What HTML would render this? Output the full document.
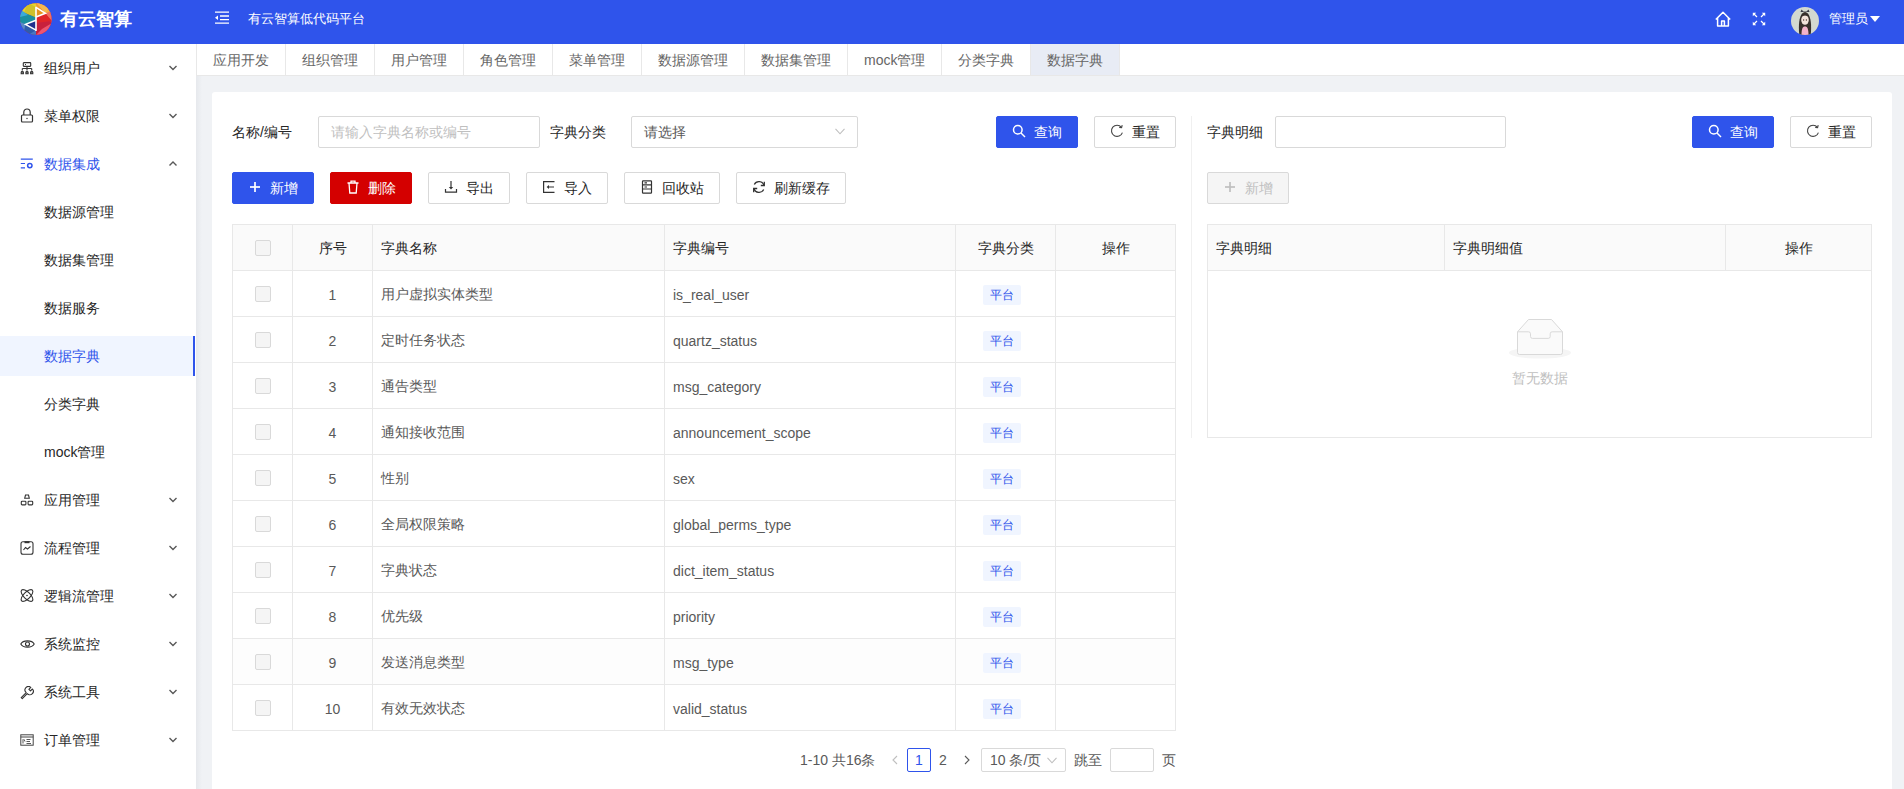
<!DOCTYPE html>
<html><head><meta charset="utf-8">
<style>
*{box-sizing:border-box;margin:0;padding:0}
html,body{width:1904px;height:789px;overflow:hidden;background:#f0f2f5;font-family:"Liberation Sans",sans-serif;font-size:14px;color:#262626}
.abs{position:absolute}
#hdr{position:absolute;left:0;top:0;width:1904px;height:44px;background:#2f54eb;color:#fff}
#side{position:absolute;left:0;top:44px;width:196px;height:745px;background:#fff}
.mi{position:absolute;left:0;width:195px;height:48px;line-height:48px;font-size:14px;color:#262626}
.mi .t{position:absolute;left:44px;top:0}
.mi svg.ic{position:absolute;left:20px;top:17px}
.mi svg.ch{position:absolute;left:168px;top:20px}
#tabs{position:absolute;left:196px;top:44px;width:1708px;height:32px;background:#fff;border-bottom:1px solid #e8e8e8;border-left:1px solid #e8e8e8}
.tab{float:left;height:31px;line-height:29px;padding:2px 16px 0;border-right:1px solid #e8e8e8;color:#666;font-size:14px}
.tab.on{background:#e8ecf5}
#card{position:absolute;left:212px;top:92px;width:1680px;height:720px;background:#fff;border-radius:3px}
.lbl{position:absolute;line-height:32px;font-size:14px;color:#262626}
.inp{position:absolute;height:32px;border:1px solid #d9d9d9;border-radius:2px;background:#fff;line-height:30px;padding-left:12px;font-size:14px}
.btn{position:absolute;height:32px;border:1px solid #d9d9d9;border-radius:2px;background:#fff;line-height:30px;font-size:14px;color:#262626;padding-left:16px}
.btn svg{position:absolute;left:15px;top:7px}
.btn span{position:absolute;left:37px;top:0}
.btn.pri{background:#2f54eb;border-color:#2f54eb;color:#fff;font-weight:500}
.btn.red{background:#d40000;border-color:#d40000;color:#fff;font-weight:500}
.btn.dis{background:#f5f5f5;color:#bfbfbf}
table{border-collapse:collapse;position:absolute;table-layout:fixed}
td,th{border:1px solid #e8e8e8;height:46px;font-size:14px;padding:2px 8px 0;text-align:left;font-weight:normal;color:#595959}
th{background:#fafafa;color:#262626}
.c{text-align:center}
.cb{display:inline-block;position:relative;top:-1px;width:16px;height:16px;border:1px solid #d9d9d9;border-radius:2px;background:#f5f5f5;vertical-align:middle}
.tag{display:inline-block;height:20px;line-height:20px;padding:0 7px;background:#f0f5ff;color:#2f54eb;font-size:12px;border-radius:2px;margin-right:7px}
</style></head><body>
<div id="hdr">
<svg class="abs" style="left:20px;top:3px" width="32" height="32" viewBox="0 0 32 32">
<defs><clipPath id="cc"><circle cx="15.8" cy="16" r="15.8"/></clipPath></defs>
<g clip-path="url(#cc)">
<rect x="0" y="0" width="32" height="32" fill="#d8243e"/>
<polygon points="0,0 16,0 16,14.5 0,8" fill="#e3d42c"/>
<polygon points="4,9.5 16,14.5 16,4 8,0" fill="#cfc02a"/>
<polygon points="16,0 32,0 32,10 25.4,10.3" fill="#f2ad45"/>
<polygon points="16,4.4 25.4,10.3 16,14" fill="#e8921e"/>
<polygon points="16,0 25.4,10.3 32,0" fill="#f5b850"/><polygon points="16,0 25.4,10.3 16,4.4" fill="#f0a030"/>
<polygon points="25.4,10.3 32,8 32,22" fill="#f07060"/>
<polygon points="16,14 25.4,10.3 32,18 16,20" fill="#e02528"/>
<polygon points="16,20 32,18 32,32 16,32" fill="#c8203c"/>
<polygon points="22,26 32,20 32,32 16,32" fill="#ec5570"/>
<polygon points="0,8 16,14.5 16,17.2 5.5,21.3 0,20" fill="#1b8fa0"/>
<polygon points="0,6 8,12 0,14" fill="#3aaad8"/>
<polygon points="0,20 5.5,21.3 16,27.2 16,32 0,32" fill="#2f5cab"/>
<polygon points="0,19 5.5,21.3 4,28 0,28" fill="#5a8ac8"/>
<polygon points="16,17.2 5.5,21.3 16,27.2" fill="#1f2d8c"/>
<polygon points="16,27.2 16,32 8,32" fill="#4a78c0"/>
</g>
<polyline points="16,4.4 25.4,10.3 16,14" fill="none" stroke="#fff" stroke-width="1.5" stroke-linejoin="miter"/>
<polyline points="16,17.2 5.5,21.3 16,27.2" fill="none" stroke="#fff" stroke-width="1.5"/>
<line x1="16" y1="3.8" x2="16" y2="28" stroke="#fff" stroke-width="1.6"/>
</svg>
<div class="abs" style="left:60px;top:0;line-height:38px;font-size:18px;font-weight:bold;color:#fff">有云智算</div>
<svg class="abs" style="left:215px;top:11px" width="14" height="14" viewBox="0 0 14 14" fill="none" stroke="#fff" stroke-width="1.3"><path d="M0 1.2 H14 M5 5 H14 M5 8.6 H14 M0 12.2 H14"/><polygon points="0,6.8 3,4.6 3,9" fill="#fff" stroke="none"/></svg>
<div class="abs" style="left:248px;top:0;line-height:38px;font-size:13px;color:#fff;font-weight:500">有云智算低代码平台</div>
<svg class="abs" style="left:1715px;top:11px" width="16" height="16" viewBox="0 0 16 16" fill="none" stroke="#fff" stroke-width="1.5" stroke-linejoin="round">
<path d="M0.8 8.6 L8 1.2 L15.2 8.6 M2.6 7 V14.9 H13.4 V7 M6.6 14.9 V9.9 H9.4 V14.9"/>
</svg>
<svg class="abs" style="left:1752px;top:12px" width="14" height="14" viewBox="0 0 14 14" fill="none" stroke="#fff" stroke-width="1.2">
<path d="M1.5 1.5 L5 5 M12.5 1.5 L9 5 M1.5 12.5 L5 9 M12.5 12.5 L9 9"/>
<path d="M0.8 0.8 H4.2 L0.8 4.2 Z M13.2 0.8 H9.8 L13.2 4.2 Z M0.8 13.2 H4.2 L0.8 9.8 Z M13.2 13.2 H9.8 L13.2 9.8 Z" fill="#fff" stroke="none"/>
</svg>
<svg class="abs" style="left:1791px;top:7px" width="28" height="28" viewBox="0 0 28 28">
<defs><clipPath id="av"><circle cx="14" cy="14" r="14"/></clipPath></defs>
<g clip-path="url(#av)">
<rect width="28" height="28" fill="#d3d9d0"/>
<path d="M9.5 5 L10.5 2.5 L12.5 4.5 L15.5 4.5 L17.5 2.5 L18.5 5 Z" fill="#3b3d48"/>
<path d="M8.5 30 C7 18 8 6 14 5 C20 6 21 18 19.5 30 Z" fill="#37302c"/>
<ellipse cx="14" cy="13" rx="3.8" ry="4.8" fill="#f1e2da"/>
<path d="M10.3 10 C12 8 16 8 17.7 10 L17.5 8 C16 6.5 12 6.5 10.5 8 Z" fill="#37302c"/>
<circle cx="12.6" cy="13" r="0.7" fill="#5a4038"/><circle cx="15.4" cy="13" r="0.7" fill="#5a4038"/>
<path d="M10.5 28 C10.5 22 11.5 19.5 14 19.5 C16.5 19.5 17.5 22 17.5 28 Z" fill="#f2b3cb"/>
</g></svg>
<div class="abs" style="left:1829px;top:0;line-height:38px;font-size:13px;color:#fff;font-weight:500">管理员</div>
<svg class="abs" style="left:1870px;top:16px" width="10" height="6" viewBox="0 0 10 6"><polygon points="0,0 10,0 5,6" fill="#fff"/></svg>
</div>
<div id="side"><div class="mi" style="top:0px;"><svg class="ic" style="top:18px" width="14" height="13" viewBox="0 0 14 13" fill="none" stroke="#333" stroke-width="1.1"><rect x="3.3" y="0.6" width="7.4" height="3.8" rx="0.6"/><path d="M5 2.5 H6" stroke-width="1"/><path d="M7 4.4 V6.5 M2.3 6.5 H11.7 M2.3 6.5 V8.5 M7 6.5 V8.5 M11.7 6.5 V8.5"/><path d="M1.2 11.8 V10.3 A1.1 1.1 0 0 1 3.4 10.3 V11.8 Z M5.9 11.8 V10.3 A1.1 1.1 0 0 1 8.1 10.3 V11.8 Z M10.6 11.8 V10.3 A1.1 1.1 0 0 1 12.8 10.3 V11.8 Z" fill="#777"/></svg><span class="t">组织用户</span><svg class="ch" width="10" height="8" viewBox="0 0 10 8" fill="none" stroke="#595959" stroke-width="1.4"><polyline points="1.5,2 5,5.5 8.5,2"/></svg></div><div class="mi" style="top:48px;"><svg class="ic" style="top:16px" width="14" height="15" viewBox="0 0 14 15" fill="none" stroke="#333" stroke-width="1.2"><path d="M3.8 7 V4.2 A3.2 3.2 0 0 1 10.2 4.2 V7"/><rect x="1.5" y="7" width="11" height="7" rx="1"/><circle cx="7" cy="10.5" r="0.7" fill="#333" stroke="none"/></svg><span class="t">菜单权限</span><svg class="ch" width="10" height="8" viewBox="0 0 10 8" fill="none" stroke="#595959" stroke-width="1.4"><polyline points="1.5,2 5,5.5 8.5,2"/></svg></div><div class="mi" style="top:96px;color:#2f54eb;"><svg class="ic" style="top:18px" width="14" height="12" viewBox="0 0 14 12" fill="none" stroke="#2f54eb" stroke-width="1.2"><path d="M0.8 1.2 H12.8 M0.8 5.5 H5 M0.8 9.8 H5"/><circle cx="9.8" cy="7.6" r="2.2" stroke-width="1.5"/></svg><span class="t">数据集成</span><svg class="ch" width="10" height="8" viewBox="0 0 10 8" fill="none" stroke="#595959" stroke-width="1.4"><polyline points="1.5,5.5 5,2 8.5,5.5"/></svg></div><div class="mi" style="top:144px;"><span class="t">数据源管理</span></div><div class="mi" style="top:192px;"><span class="t">数据集管理</span></div><div class="mi" style="top:240px;"><span class="t">数据服务</span></div><div class="mi" style="top:292px;height:40px;line-height:40px;background:#f0f5ff;color:#2f54eb"><span class="t">数据字典</span><div class="abs" style="left:193px;top:0;width:2px;height:40px;background:#2f54eb"></div></div><div class="mi" style="top:336px;"><span class="t">分类字典</span></div><div class="mi" style="top:384px;"><span class="t">mock管理</span></div><div class="mi" style="top:432px;"><svg class="ic" style="top:18px" width="14" height="14" viewBox="0 0 14 14" fill="none" stroke="#333" stroke-width="1.1"><path d="M5.5 1 H8.5 L9.3 4.3 H4.7 Z"/><rect x="1.3" y="7.3" width="4.6" height="3.6" rx="0.8"/><rect x="8.1" y="7.3" width="4.6" height="3.6" rx="0.8"/></svg><span class="t">应用管理</span><svg class="ch" width="10" height="8" viewBox="0 0 10 8" fill="none" stroke="#595959" stroke-width="1.4"><polyline points="1.5,2 5,5.5 8.5,2"/></svg></div><div class="mi" style="top:480px;"><svg class="ic" style="top:16px" width="14" height="15" viewBox="0 0 14 15" fill="none" stroke="#333" stroke-width="1.1"><rect x="1" y="1.8" width="12" height="12.4" rx="2"/><path d="M4.5 2.2 H9.5" stroke-width="2"/><polyline points="3.5,10 5.5,7.5 7.5,9 10.5,6.5"/></svg><span class="t">流程管理</span><svg class="ch" width="10" height="8" viewBox="0 0 10 8" fill="none" stroke="#595959" stroke-width="1.4"><polyline points="1.5,2 5,5.5 8.5,2"/></svg></div><div class="mi" style="top:528px;"><svg class="ic" style="top:16px;left:19px" width="16" height="15" viewBox="0 0 16 15" fill="none" stroke="#333" stroke-width="1.1"><ellipse cx="8" cy="7.5" rx="7.6" ry="3.3" transform="rotate(45 8 7.5)"/><ellipse cx="8" cy="7.5" rx="7.6" ry="3.3" transform="rotate(-45 8 7.5)"/><circle cx="8" cy="7.5" r="0.8" fill="#333" stroke="none"/></svg><span class="t">逻辑流管理</span><svg class="ch" width="10" height="8" viewBox="0 0 10 8" fill="none" stroke="#595959" stroke-width="1.4"><polyline points="1.5,2 5,5.5 8.5,2"/></svg></div><div class="mi" style="top:576px;"><svg class="ic" style="top:19px" width="15" height="10" viewBox="0 0 15 10" fill="none" stroke="#333" stroke-width="1.1"><path d="M0.8 5 C3 0.8 12 0.8 14.2 5 C12 9.2 3 9.2 0.8 5 Z"/><circle cx="7.5" cy="5" r="2"/></svg><span class="t">系统监控</span><svg class="ch" width="10" height="8" viewBox="0 0 10 8" fill="none" stroke="#595959" stroke-width="1.4"><polyline points="1.5,2 5,5.5 8.5,2"/></svg></div><div class="mi" style="top:624px;"><svg class="ic" style="top:18px" width="14" height="14" viewBox="0 0 14 14" fill="none" stroke="#333" stroke-width="1.1" stroke-linejoin="round"><path d="M1.2 11.6 L6.2 6.6 A3.4 3.4 0 0 1 10.8 1.4 L8.9 3.3 L10.5 4.9 L12.4 3 A3.4 3.4 0 0 1 7.2 7.6 L2.3 12.6 Z"/></svg><span class="t">系统工具</span><svg class="ch" width="10" height="8" viewBox="0 0 10 8" fill="none" stroke="#595959" stroke-width="1.4"><polyline points="1.5,2 5,5.5 8.5,2"/></svg></div><div class="mi" style="top:672px;"><svg class="ic" style="top:18px" width="14" height="12" viewBox="0 0 14 12" fill="none" stroke="#444" stroke-width="1"><rect x="0.8" y="0.8" width="12.4" height="10.4"/><path d="M0.8 3 H13.2"/><path d="M3 5.2 V9.5 M4 5.3 L5 7.5 M6.5 5.5 H10.5 M6.5 7.5 H10 M6.5 9.5 H11" stroke-width="0.9"/></svg><span class="t">订单管理</span><svg class="ch" width="10" height="8" viewBox="0 0 10 8" fill="none" stroke="#595959" stroke-width="1.4"><polyline points="1.5,2 5,5.5 8.5,2"/></svg></div></div>
<div id="tabs"><div class="tab">应用开发</div><div class="tab">组织管理</div><div class="tab">用户管理</div><div class="tab">角色管理</div><div class="tab">菜单管理</div><div class="tab">数据源管理</div><div class="tab">数据集管理</div><div class="tab">mock管理</div><div class="tab">分类字典</div><div class="tab on">数据字典</div></div>
<div class="abs" style="left:196px;top:76px;width:6px;height:713px;background:linear-gradient(to right,rgba(0,20,50,0.045),rgba(0,20,50,0))"></div>
<div id="card"><div class="lbl" style="left:20px;top:24px">名称/编号</div><div class="inp" style="left:106px;top:24px;width:222px;color:#bfbfbf">请输入字典名称或编号</div><div class="lbl" style="left:338px;top:24px">字典分类</div><div class="inp" style="left:419px;top:24px;width:227px;color:#595959">请选择<svg class="abs" style="right:12px;top:11px" width="10" height="7" viewBox="0 0 10 7" fill="none" stroke="#bfbfbf" stroke-width="1.1"><polyline points="0.5,0.8 5,5.8 9.5,0.8"/></svg></div><div class="btn pri" style="left:784px;top:24px;width:82px"><svg width="14" height="14" viewBox="0 0 14 14" fill="none" stroke="#fff" stroke-width="1.5"><circle cx="5.8" cy="5.8" r="4.3"/><line x1="9" y1="9" x2="13" y2="13"/></svg><span>查询</span></div><div class="btn" style="left:882px;top:24px;width:82px"><svg width="14" height="14" viewBox="0 0 14 14" fill="none" stroke="#444" stroke-width="1.1"><path d="M11.4 3.2 A5.6 5.6 0 1 0 12.4 8.6"/><polyline points="12.2,1.2 11.6,3.6 9.2,3.4"/></svg><span>重置</span></div><div class="btn pri" style="left:20px;top:80px;width:82px"><svg width="14" height="14" viewBox="0 0 14 14" fill="none" stroke="#fff" stroke-width="1.7"><line x1="7" y1="2" x2="7" y2="12"/><line x1="2" y1="7" x2="12" y2="7"/></svg><span>新增</span></div><div class="btn red" style="left:118px;top:80px;width:82px"><svg width="14" height="14" viewBox="0 0 14 14" fill="none" stroke="#fff" stroke-width="1.3"><path d="M1.5 3 H12.5 M5 3 V1.2 H9 V3 M3 3 L3.8 13 H10.2 L11 3"/></svg><span>删除</span></div><div class="btn" style="left:216px;top:80px;width:82px"><svg width="14" height="14" viewBox="0 0 14 14" fill="none" stroke="#333" stroke-width="1.2"><path d="M7 1 V8 M1.5 9 V12.2 H12.5 V9"/><polygon points="4.8,7 9.2,7 7,9.6" fill="#333" stroke="none"/></svg><span>导出</span></div><div class="btn" style="left:314px;top:80px;width:82px"><svg width="14" height="14" viewBox="0 0 14 14" fill="none" stroke="#333" stroke-width="1.2"><path d="M12.5 1.6 H1.6 V12.4 H12.5 M12 7 H6.5"/><polygon points="7,4.9 7,9.1 4.6,7" fill="#333" stroke="none"/></svg><span>导入</span></div><div class="btn" style="left:412px;top:80px;width:96px"><svg width="14" height="14" viewBox="0 0 14 14" fill="none" stroke="#333" stroke-width="1.2"><rect x="2.5" y="0.8" width="9" height="12.4" rx="0.6"/><path d="M2.5 4.8 H11.5 M2.5 9 H11.5 M4.5 2.8 H7 M4.5 7 H7 M9.5 11 H9.6"/></svg><span>回收站</span></div><div class="btn" style="left:524px;top:80px;width:110px"><svg width="14" height="14" viewBox="0 0 14 14" fill="none" stroke="#333" stroke-width="1.3"><path d="M12 5.5 A5.2 5.2 0 0 0 2.3 4.5 M2 8.5 A5.2 5.2 0 0 0 11.7 9.5"/><polyline points="12.3,1.8 12.3,5.5 8.8,5.5"/><polyline points="1.7,12.2 1.7,8.5 5.2,8.5"/></svg><span>刷新缓存</span></div><table style="left:20px;top:132px;width:943px"><colgroup><col style="width:60px"><col style="width:80px"><col style="width:292px"><col style="width:291px"><col style="width:100px"><col style="width:120px"></colgroup><tr><th class="c"><span class="cb"></span></th><th class="c">序号</th><th>字典名称</th><th>字典编号</th><th class="c">字典分类</th><th class="c">操作</th></tr><tr><td class="c"><span class="cb"></span></td><td class="c">1</td><td>用户虚拟实体类型</td><td>is_real_user</td><td class="c"><span class="tag">平台</span></td><td></td></tr><tr><td class="c"><span class="cb"></span></td><td class="c">2</td><td>定时任务状态</td><td>quartz_status</td><td class="c"><span class="tag">平台</span></td><td></td></tr><tr><td class="c"><span class="cb"></span></td><td class="c">3</td><td>通告类型</td><td>msg_category</td><td class="c"><span class="tag">平台</span></td><td></td></tr><tr><td class="c"><span class="cb"></span></td><td class="c">4</td><td>通知接收范围</td><td>announcement_scope</td><td class="c"><span class="tag">平台</span></td><td></td></tr><tr><td class="c"><span class="cb"></span></td><td class="c">5</td><td>性别</td><td>sex</td><td class="c"><span class="tag">平台</span></td><td></td></tr><tr><td class="c"><span class="cb"></span></td><td class="c">6</td><td>全局权限策略</td><td>global_perms_type</td><td class="c"><span class="tag">平台</span></td><td></td></tr><tr><td class="c"><span class="cb"></span></td><td class="c">7</td><td>字典状态</td><td>dict_item_status</td><td class="c"><span class="tag">平台</span></td><td></td></tr><tr><td class="c"><span class="cb"></span></td><td class="c">8</td><td>优先级</td><td>priority</td><td class="c"><span class="tag">平台</span></td><td></td></tr><tr style="background:#fdfdfd"><td class="c"><span class="cb"></span></td><td class="c">9</td><td>发送消息类型</td><td>msg_type</td><td class="c"><span class="tag">平台</span></td><td></td></tr><tr><td class="c"><span class="cb"></span></td><td class="c">10</td><td>有效无效状态</td><td>valid_status</td><td class="c"><span class="tag">平台</span></td><td></td></tr></table><div class="abs" style="left:588px;top:656px;line-height:24px;font-size:14px;color:#595959">1-10 共16条</div><svg class="abs" style="left:678px;top:663px" width="10" height="10" viewBox="0 0 10 10" fill="none" stroke="#bfbfbf" stroke-width="1.1"><polyline points="7,1 3,5 7,9"/></svg><div class="abs" style="left:695px;top:656px;width:24px;height:24px;border:1px solid #2f54eb;border-radius:2px;line-height:22px;text-align:center;color:#2f54eb">1</div><div class="abs" style="left:719px;top:656px;width:24px;line-height:24px;text-align:center;color:#595959">2</div><svg class="abs" style="left:750px;top:663px" width="10" height="10" viewBox="0 0 10 10" fill="none" stroke="#595959" stroke-width="1.1"><polyline points="3,1 7,5 3,9"/></svg><div class="abs" style="left:769px;top:656px;width:85px;height:24px;border:1px solid #d9d9d9;border-radius:2px;line-height:22px;padding-left:8px;color:#595959">10 条/页<svg class="abs" style="right:8px;top:8px" width="10" height="7" viewBox="0 0 10 7" fill="none" stroke="#bfbfbf" stroke-width="1.1"><polyline points="0.5,0.8 5,5.8 9.5,0.8"/></svg></div><div class="abs" style="left:862px;top:656px;line-height:24px;color:#595959">跳至</div><div class="abs" style="left:898px;top:656px;width:44px;height:24px;border:1px solid #d9d9d9;border-radius:2px"></div><div class="abs" style="left:950px;top:656px;line-height:24px;color:#595959">页</div><div class="abs" style="left:979px;top:24px;width:1px;height:322px;background:#f0f0f0"></div><div class="lbl" style="left:995px;top:24px">字典明细</div><div class="inp" style="left:1063px;top:24px;width:231px"></div><div class="btn pri" style="left:1480px;top:24px;width:82px"><svg width="14" height="14" viewBox="0 0 14 14" fill="none" stroke="#fff" stroke-width="1.5"><circle cx="5.8" cy="5.8" r="4.3"/><line x1="9" y1="9" x2="13" y2="13"/></svg><span>查询</span></div><div class="btn" style="left:1578px;top:24px;width:82px"><svg width="14" height="14" viewBox="0 0 14 14" fill="none" stroke="#444" stroke-width="1.1"><path d="M11.4 3.2 A5.6 5.6 0 1 0 12.4 8.6"/><polyline points="12.2,1.2 11.6,3.6 9.2,3.4"/></svg><span>重置</span></div><div class="btn dis" style="left:995px;top:80px;width:82px"><svg width="14" height="14" viewBox="0 0 14 14" fill="none" stroke="#bfbfbf" stroke-width="1.7"><line x1="7" y1="2" x2="7" y2="12"/><line x1="2" y1="7" x2="12" y2="7"/></svg><span>新增</span></div><table style="left:995px;top:132px;width:664px"><colgroup><col style="width:237px"><col style="width:281px"><col style="width:146px"></colgroup><tr><th>字典明细</th><th>字典明细值</th><th class="c">操作</th></tr><tr><td colspan="3" style="height:167px;text-align:center;vertical-align:top"></td></tr></table><svg class="abs" style="left:1296px;top:226px" width="64" height="42" viewBox="0 0 64 42">
<ellipse cx="32" cy="34.8" rx="31" ry="5.8" fill="#f5f5f5"/>
<path d="M9.5 13.8 L20.5 1.5 H43.5 L54.5 13.8 V34.5 a2 2 0 0 1 -2 2 H11.5 a2 2 0 0 1 -2 -2 Z" fill="#fafafa" stroke="#d9d9d9" stroke-width="1"/>
<path d="M9.5 13.8 H20.5 a2 2 0 0 1 2 2 V18.4 a2 2 0 0 0 2 2 H40.2 a2 2 0 0 0 2 -2 V15.8 a2 2 0 0 1 2 -2 H54.5" fill="none" stroke="#d9d9d9" stroke-width="1"/>
</svg><div class="abs" style="left:1300px;top:276px;line-height:20px;font-size:14px;color:#bfbfbf">暂无数据</div></div>
</body></html>
